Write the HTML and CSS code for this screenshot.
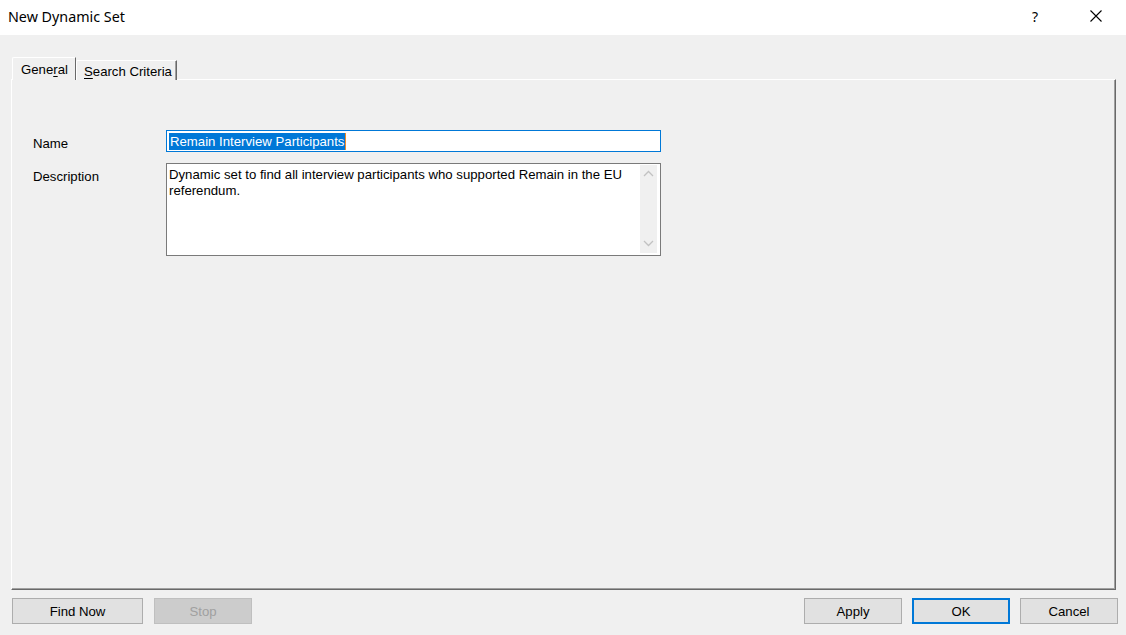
FILE: index.html
```html
<!DOCTYPE html>
<html>
<head>
<meta charset="utf-8">
<title>New Dynamic Set</title>
<link rel="stylesheet" href="styles.css">
</head>
<body>
<div class="window">
  <div class="titlebar">
    <span class="title">New Dynamic Set</span>
    <div class="title-actions">
      <span class="help">?</span>
      <svg class="close" width="12" height="12" viewBox="0 0 12 12"><path d="M0.5 0.5 L11.5 11.5 M11.5 0.5 L0.5 11.5" stroke="#000" stroke-width="1.1" fill="none"/></svg>
    </div>
  </div>
  <div class="main">
    <div class="tabs">
      <div class="tab tab-active">Gene<u>r</u>al</div>
      <div class="tab"><u>S</u>earch Criteria</div>
    </div>
    <div class="panel">
      <div class="form">
        <div class="row">
          <label class="label">Name</label>
          <div class="input"><span class="sel">Remain Interview Participants</span><span class="caret"></span></div>
        </div>
        <div class="row">
          <label class="label">Description</label>
          <div class="textarea">
            <div class="ta-text">Dynamic set to find all interview participants who supported Remain in the EU referendum.</div>
            <div class="scrollbar">
              <svg width="11" height="7" viewBox="0 0 11 7"><path d="M1 6 L5.5 1.5 L10 6" stroke="#c2c2c2" stroke-width="1.3" fill="none"/></svg>
              <svg width="11" height="7" viewBox="0 0 11 7"><path d="M1 1 L5.5 5.5 L10 1" stroke="#c2c2c2" stroke-width="1.3" fill="none"/></svg>
            </div>
          </div>
        </div>
      </div>
    </div>
    <div class="footer">
      <div class="btn-group">
        <button class="btn btn-find">Find Now</button>
        <button class="btn btn-disabled">Stop</button>
      </div>
      <div class="btn-group">
        <button class="btn">Apply</button>
        <button class="btn btn-default">OK</button>
        <button class="btn">Cancel</button>
      </div>
    </div>
  </div>
</div>
</body>
</html>
```
FILE: styles.css
```css
html, body {
  margin: 0;
  padding: 0;
  background: #f0f0f0;
}
body {
  width: 1126px;
  height: 635px;
  overflow: hidden;
  font-family: "Liberation Sans", Arial, sans-serif;
  font-size: 13.2px;
  color: #000;
}
.window {
  width: 1126px;
  height: 635px;
  display: flex;
  flex-direction: column;
}
.titlebar {
  height: 35px;
  background: #fff;
  display: flex;
  align-items: center;
  justify-content: space-between;
  padding-left: 8px;
  box-sizing: border-box;
}
.title {
  font-family: "Noto Sans", "Open Sans", sans-serif;
  font-size: 14.3px;
  color: #000;
  margin-top: -2px;
}
.title-actions {
  display: flex;
  align-items: center;
}
.help {
  font-family: "Noto Sans", sans-serif;
  font-size: 14px;
  width: 58px;
  margin-top: -3px;
}
.close {
  margin-right: 24px;
  margin-top: -3px;
}
.main {
  padding: 23px 0 0 11px;
  display: flex;
  flex-direction: column;
}
.tabs {
  display: flex;
  align-items: flex-end;
  height: 22px;
  padding-left: 1px;
  position: relative;
  z-index: 2;
  margin-bottom: -1px;
}
.tab {
  height: 20px;
  box-sizing: border-box;
  white-space: nowrap;
  flex-shrink: 0;
  border-top: 1px solid #fff;
  border-left: 1px solid #fff;
  border-right: 2px solid #a0a0a0;
  padding: 2px 5px 0 7px;
  line-height: 17px;
  background: #f0f0f0;
  border-top-left-radius: 2px;
}
.tab-active {
  height: 23px;
  width: 64px;
  padding-left: 8px;
  padding-top: 3px;
  border-right: 1px solid #696969;
}
.tab + .tab {
  width: 101px;
  border-left: 1px solid #fff;
  border-right: 1px solid #696969;
  box-shadow: inset -1px 0 0 #a0a0a0;
  padding: 2px 0 0 7px;
}
.tab u {
  text-underline-offset: 2px;
}
.panel {
  width: 1105px;
  height: 511px;
  box-sizing: border-box;
  border-top: 1px solid #fff;
  border-left: 1px solid #fff;
  border-right: 1px solid #696969;
  border-bottom: 1px solid #696969;
  box-shadow: inset -1px -1px 0 #a0a0a0;
}
.form {
  padding: 50px 0 0 21px;
  display: flex;
  flex-direction: column;
  gap: 11px;
}
.row {
  display: flex;
  align-items: flex-start;
}
.label {
  width: 133px;
  padding-top: 6px;
  line-height: 15px;
}
.input {
  width: 495px;
  height: 22px;
  box-sizing: border-box;
  border: 1px solid #0078d7;
  background: #fff;
  padding: 2px 0 0 2px;
  display: flex;
  align-items: flex-start;
}
.sel {
  background: #0078d7;
  color: #fff;
  line-height: 17px;
  height: 17px;
  padding: 0 1px;
  white-space: nowrap;
}
.caret {
  width: 1px;
  height: 17px;
  background: #f28c28;
}
.textarea {
  width: 495px;
  height: 93px;
  box-sizing: border-box;
  border: 1px solid #7a7a7a;
  background: #fff;
  display: flex;
}
.ta-text {
  flex: 1;
  padding: 3px 4px 0 2px;
  line-height: 16px;
  color: #000;
}
.scrollbar {
  width: 17px;
  margin: 1px 3px 2px 0;
  background: #f0f0f0;
  display: flex;
  flex-direction: column;
  justify-content: space-between;
  align-items: center;
  padding: 5px 0 6px;
  box-sizing: border-box;
}
.footer {
  display: flex;
  justify-content: space-between;
  margin-top: 8px;
  padding-left: 1px;
  width: 1106px;
}
.btn-group {
  display: flex;
  gap: 10px;
}
.btn-group:first-child {
  gap: 11px;
}
.btn {
  font-family: "Liberation Sans", Arial, sans-serif;
  font-size: 13.2px;
  color: #000;
  width: 98px;
  height: 26px;
  box-sizing: border-box;
  background: #e1e1e1;
  border: 1px solid #adadad;
  margin: 0;
  padding: 0;
  border-radius: 0;
}
.btn-find {
  width: 131px;
}
.btn-disabled {
  background: #cccccc;
  border-color: #bfbfbf;
  color: #a0a0a0;
}
.btn-default {
  border: 2px solid #0078d7;
}
```
